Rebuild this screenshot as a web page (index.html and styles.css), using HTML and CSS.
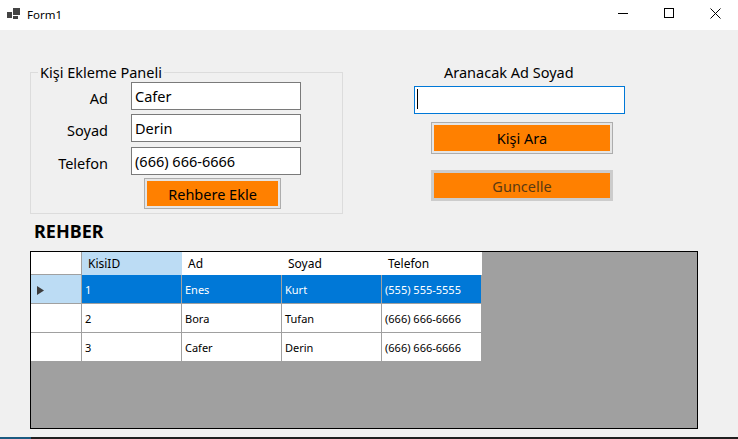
FILE: index.html
```html
<!DOCTYPE html>
<html lang="tr">
<head>
<meta charset="utf-8">
<title>Form1</title>
<link rel="stylesheet" href="styles.css">
</head>
<body>
<div class="window">
  <header class="titlebar">
    <svg class="app-icon" width="14" height="12" viewBox="0 0 14 12">
      <rect x="6" y="0" width="7" height="7" fill="#444"/>
      <rect x="0" y="4" width="5" height="6" fill="#444"/>
      <rect x="6" y="8" width="5" height="3" fill="#444"/>
    </svg>
    <span class="title">Form1</span>
    <div class="controls">
      <span class="ctl"><svg width="10" height="10" viewBox="0 0 10 10"><rect x="0" y="5" width="10" height="1" fill="#000"/></svg></span>
      <span class="ctl"><svg width="10" height="10" viewBox="0 0 10 10"><rect x="0.5" y="0.5" width="9" height="9" fill="none" stroke="#000" stroke-width="1"/></svg></span>
      <span class="ctl"><svg width="11" height="11" viewBox="0 0 11 11"><path d="M0.5 0.5 L10.5 10.5 M10.5 0.5 L0.5 10.5" stroke="#000" stroke-width="1" fill="none"/></svg></span>
    </div>
  </header>

  <main class="client">
    <div class="top">
      <fieldset class="panel">
        <legend class="legend">Kişi Ekleme Paneli</legend>
        <div class="form">
          <div class="row"><label class="lbl">Ad</label><div class="tb">Cafer</div></div>
          <div class="row row-2"><label class="lbl">Soyad</label><div class="tb">Derin</div></div>
          <div class="row row-3"><label class="lbl">Telefon</label><div class="tb">(666) 666-6666</div></div>
          <div class="btn-row"><button class="btn btn-add">Rehbere Ekle</button></div>
        </div>
      </fieldset>

      <div class="search">
        <div class="search-label">Aranacak Ad Soyad</div>
        <div class="tb tb-focus"><span class="caret"></span></div>
        <button class="btn btn-search">Kişi Ara</button>
        <button class="btn btn-update">Guncelle</button>
      </div>
    </div>

    <h2 class="section">REHBER</h2>

    <div class="grid-view">
      <div class="grid">
        <div class="h corner"></div>
        <div class="h h-sel">KisiID</div>
        <div class="h">Ad</div>
        <div class="h">Soyad</div>
        <div class="h">Telefon</div>

        <div class="rh rh-sel"><svg width="7" height="9" viewBox="0 0 7 9"><polygon points="0,0 7,4.5 0,9" fill="#3c3c3c"/></svg></div>
        <div class="c sel">1</div>
        <div class="c sel">Enes</div>
        <div class="c sel">Kurt</div>
        <div class="c sel">(555) 555-5555</div>

        <div class="rh"></div>
        <div class="c">2</div>
        <div class="c">Bora</div>
        <div class="c">Tufan</div>
        <div class="c">(666) 666-6666</div>

        <div class="rh"></div>
        <div class="c">3</div>
        <div class="c">Cafer</div>
        <div class="c">Derin</div>
        <div class="c">(666) 666-6666</div>
      </div>
    </div>
  </main>

  <div class="taskbar"><span class="task-accent"></span></div>
</div>
</body>
</html>
```

FILE: styles.css
```css
* { box-sizing: border-box; }

html, body {
  margin: 0;
  padding: 0;
}

body {
  width: 738px;
  height: 439px;
  overflow: hidden;
  font-family: "Noto Sans", "DejaVu Sans", sans-serif;
  color: #000;
  background: #f0f0f0;
}

.window {
  width: 738px;
  height: 439px;
  display: flex;
  flex-direction: column;
}

/* ---------- title bar ---------- */
.titlebar {
  height: 30px;
  flex: 0 0 30px;
  background: #fff;
  display: flex;
  align-items: center;
  padding-left: 7px;
}

.app-icon {
  display: block;
  margin-top: -3px;
}

.title {
  margin-left: 6px;
  font-size: 11.5px;
  line-height: 16px;
  margin-top: -1px;
}

.controls {
  margin-left: auto;
  display: flex;
  height: 30px;
}

.ctl {
  width: 46px;
  height: 30px;
  display: flex;
  justify-content: center;
  align-items: flex-start;
  padding-top: 8px;
}

.ctl svg { display: block; }

/* ---------- client area ---------- */
.client {
  flex: 0 0 407px;
  height: 407px;
  background: #f0f0f0;
  display: flex;
  flex-direction: column;
}

.top {
  display: flex;
  align-items: flex-start;
}

.panel {
  margin: 32px 0 0 30px;
  padding: 0 0 4px 0;
  width: 313px;
  border: 1px solid #dcdcdc;
  min-width: 0;
}

.legend {
  margin-left: 7px;
  padding: 0 2px;
  font-size: 14.5px;
  line-height: 20px;
}

.form {
  display: flex;
  flex-direction: column;
}

.row {
  display: flex;
  align-items: center;
}

.row-2 { margin-top: 4px; }
.row-3 { margin-top: 5px; }

.lbl {
  width: 77px;
  text-align: right;
  font-size: 14.5px;
  line-height: 20px;
  padding-top: 4px;
}

.tb {
  margin-left: 23px;
  width: 170px;
  height: 28px;
  background: #fff;
  border: 1px solid #7a7a7a;
  font-size: 14.5px;
  line-height: 26px;
  padding-left: 3px;
  white-space: nowrap;
}

.btn-row {
  margin-top: 3px;
  padding-left: 113px;
}

.btn {
  display: block;
  font-family: "Noto Sans", "DejaVu Sans", sans-serif;
  font-size: 14.5px;
  color: #000;
  background: #ff8000;
  border: 1px solid #adadad;
  box-shadow: inset 0 0 0 2px #e5e5e5;
  padding: 0;
  margin: 0;
}

.btn-add {
  width: 137px;
  height: 31px;
}

/* ---------- search column ---------- */
.search {
  margin: 32px 0 0 71px;
  display: flex;
  flex-direction: column;
  align-items: flex-start;
}

.search-label {
  margin-left: 30px;
  font-size: 14.5px;
  line-height: 20px;
}

.tb-focus {
  margin: 4px 0 0 0;
  width: 211px;
  height: 28px;
  border-color: #0078d7;
  display: flex;
  align-items: flex-start;
  padding-left: 2px;
  padding-top: 2px;
}

.caret {
  display: block;
  width: 1px;
  height: 20px;
  background: #000;
}

.btn-search {
  margin: 8px 0 0 17px;
  width: 182px;
  height: 32px;
}

.btn-update {
  margin: 16px 0 0 17px;
  width: 182px;
  height: 31px;
  border: 3px solid #cccccc;
  box-shadow: none;
  color: #5a3a12;
}

/* ---------- section title ---------- */
.section {
  margin: 5px 0 0 34px;
  font-size: 18px;
  font-weight: 700;
  line-height: 24px;
}

/* ---------- data grid ---------- */
.grid-view {
  margin: 8px 0 0 30px;
  width: 668px;
  height: 178px;
  border: 1px solid #000;
  background: #a0a0a0;
}

.grid {
  display: grid;
  grid-template-columns: 51px repeat(4, 100px);
  grid-template-rows: 23px repeat(3, 29px);
  width: 451px;
}

.h {
  background: #fff;
  border-right: 1px solid #fff;
  border-bottom: 1px solid #fff;
  font-size: 12px;
  display: flex;
  align-items: center;
  padding-left: 6px;
  white-space: nowrap;
}

.h.corner {
  border-right-color: #a0a0a0;
  border-bottom-color: #a0a0a0;
}

.h.h-sel {
  background: #bcdcf4;
  border-right-color: #bcdcf4;
  border-bottom-color: #bcdcf4;
}

.rh {
  background: #fff;
  border-right: 1px solid #a0a0a0;
  border-bottom: 1px solid #a0a0a0;
  display: flex;
  align-items: center;
  padding-left: 6px;
}

.rh svg {
  display: block;
  margin-top: 2px;
}

.rh.rh-sel { background: #bcdcf4; }

.c {
  background: #fff;
  border-right: 1px solid #a0a0a0;
  border-bottom: 1px solid #a0a0a0;
  font-size: 11px;
  display: flex;
  align-items: center;
  padding-left: 3px;
  white-space: nowrap;
}

.c.sel {
  background: #0078d7;
  color: #fff;
}

/* ---------- bottom edge ---------- */
.taskbar {
  flex: 0 0 2px;
  height: 2px;
  background: #1f1f1f;
  display: flex;
}

.task-accent {
  width: 31px;
  height: 2px;
  background: #1b5a80;
}
```
